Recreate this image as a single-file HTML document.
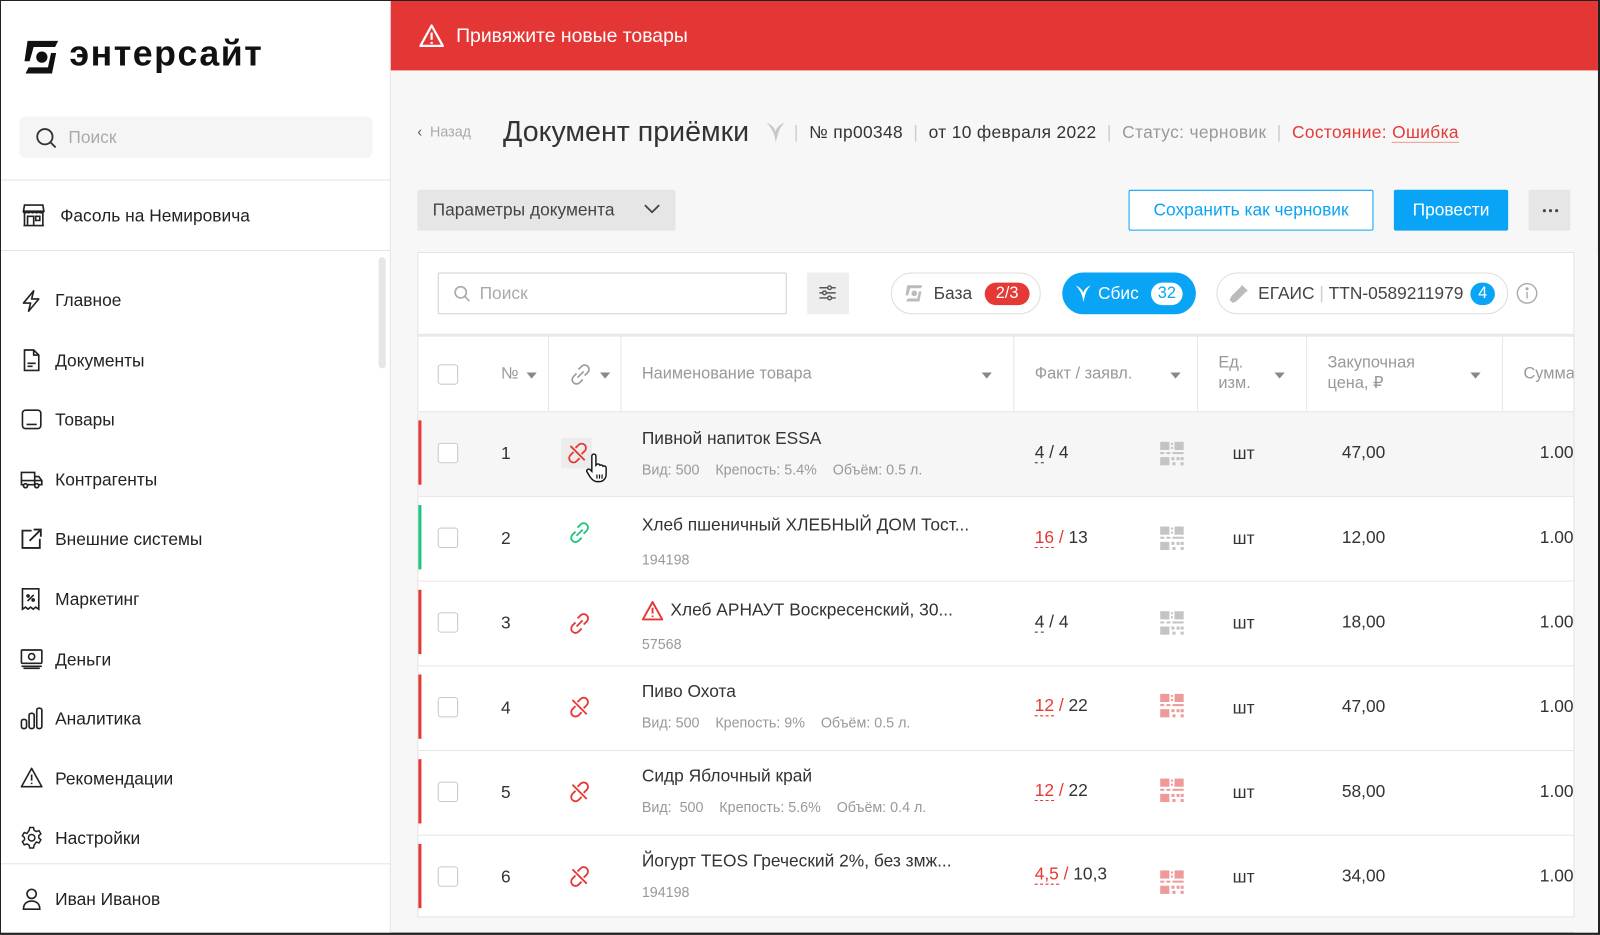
<!DOCTYPE html>
<html><head><meta charset="utf-8"><style>
*{box-sizing:border-box;margin:0;padding:0}
html,body{width:1600px;height:935px;overflow:hidden;background:#222}
#w{position:absolute;left:0;top:0;width:1568px;height:916px;transform:scale(1.020408);transform-origin:0 0;background:#f7f7f7;font-family:"Liberation Sans",sans-serif;color:#333;overflow:hidden;border:1px solid #222;border-right-width:2px;border-bottom-width:2px}
.a{position:absolute;white-space:nowrap}
#sb{position:absolute;left:0;top:0;width:382px;height:916px;background:#fff;border-right:1px solid #e3e3e3}
.nav{font-size:17px;color:#222}
.hr{position:absolute;left:0;width:382px;height:1px;background:#e4e4e4}
svg{position:absolute;overflow:visible}
.g{color:#9a9a9a}
.card{position:absolute;left:408px;top:246px;width:1134px;height:652px;background:#fff;border:1px solid #e3e3e3}
.row{position:absolute;left:409px;width:1132px;height:83px;border-top:1px solid #e6e6e6}
.cb{position:absolute;width:20px;height:20px;border:1px solid #c9c9c9;border-radius:3px;background:#fff}
.nm{font-size:17px;color:#333}
.sub{font-size:14px;color:#999}
.num{font-size:17px}
.red{color:#e53935}
.col{position:absolute;top:329px;width:1px;height:73px;background:#e6e6e6}
.th{font-size:16px;color:#999}
.tri{position:absolute;width:0;height:0;border-left:5px solid transparent;border-right:5px solid transparent;border-top:6px solid #888}
</style></head><body><div id="w">

<div id="sb">
 <svg style="left:20px;top:37px" width="40" height="36" viewBox="0 0 40 36"><path d="M6 2h30l-3 6H12L8 22H3z M34 14l-4 20H4l3-6h19l3-14z" fill="#111"/><circle cx="20" cy="18" r="5.5" fill="#111"/></svg>
 <div class="a" style="left:67px;top:32px;font-size:35px;font-weight:bold;color:#111;letter-spacing:1.5px">энтерсайт</div>
 <div class="a" style="left:18px;top:113px;width:346px;height:41px;background:#f5f5f5;border-radius:6px"></div>
 <svg style="left:34px;top:124px" width="22" height="22" viewBox="0 0 22 22"><circle cx="9" cy="9" r="7.5" fill="none" stroke="#333" stroke-width="1.8"/><path d="M14.5 14.5l5 5" stroke="#333" stroke-width="1.8"/></svg>
 <div class="a" style="left:66px;top:124px;font-size:17px;color:#aaa">Поиск</div>
 <div class="hr" style="top:175px"></div>
 <svg style="left:20px;top:198px" width="24" height="24" viewBox="0 0 24 24" fill="none" stroke="#222" stroke-width="1.6"><path d="M3 2h18l1 6H2z M2 8c0 2 3 2 3 0c0 2 4 2 4 0c0 2 4 2 4 0c0 2 4 2 4 0c0 2 4 2 5 0 M3 9v13h18V9 M6 13h6v9H6z M14 13h4v4h-4z M2 22h20"/></svg>
 <div class="a nav" style="left:58px;top:201px">Фасоль на Немировича</div>
 <div class="hr" style="top:244px"></div>
 <div class="a" style="left:370px;top:251px;width:7px;height:109px;background:#e6e6e6;border-radius:4px"></div>

 <svg style="left:20px;top:283px" width="20" height="22" viewBox="0 0 20 22" fill="none" stroke="#222" stroke-width="1.6" stroke-linejoin="round"><path d="M12 1L2 13h7l-2 8 10-12h-7z"/></svg>
 <div class="a nav" style="left:53px;top:284px">Главное</div>
 <svg style="left:21px;top:341px" width="18" height="22" viewBox="0 0 18 22" fill="none" stroke="#222" stroke-width="1.6"><path d="M2 1h9l5 5v15H2z M11 1v5h5 M5 14h8 M5 17h5"/></svg>
 <div class="a nav" style="left:53px;top:343px">Документы</div>
 <svg style="left:20px;top:400px" width="20" height="20" viewBox="0 0 20 20" fill="none" stroke="#222" stroke-width="1.6"><rect x="1" y="1" width="18" height="18" rx="3"/><path d="M5 15h10"/></svg>
 <div class="a nav" style="left:53px;top:401px">Товары</div>
 <svg style="left:19px;top:459px" width="22" height="20" viewBox="0 0 22 20" fill="none" stroke="#222" stroke-width="1.6"><path d="M1 3h13v12H1z M14 7h4l3 4v4h-7 M1 11h20"/><circle cx="5" cy="16" r="2" fill="#fff"/><circle cx="16" cy="16" r="2" fill="#fff"/></svg>
 <div class="a nav" style="left:53px;top:460px">Контрагенты</div>
 <svg style="left:19px;top:516px" width="22" height="22" viewBox="0 0 22 22" fill="none" stroke="#222" stroke-width="1.8"><path d="M11 3H2v17h17v-9 M9 13L20 2 M13 2h7v7"/></svg>
 <div class="a nav" style="left:53px;top:518px">Внешние системы</div>
 <svg style="left:20px;top:575px" width="18" height="22" viewBox="0 0 18 22" fill="none" stroke="#222" stroke-width="1.6"><path d="M1 1h16v20l-3-2-2.5 2-2.5-2-2.5 2-2.5-2-3 2z M6 13l6-6"/><circle cx="6.5" cy="8" r="1" fill="#222"/><circle cx="11.5" cy="12" r="1" fill="#222"/></svg>
 <div class="a nav" style="left:53px;top:577px">Маркетинг</div>
 <svg style="left:19px;top:635px" width="22" height="20" viewBox="0 0 22 20" fill="none" stroke="#222" stroke-width="1.6"><rect x="1" y="1" width="20" height="13" rx="1"/><circle cx="11" cy="7.5" r="3"/><path d="M1 17h20 M3 19h16"/></svg>
 <div class="a nav" style="left:53px;top:636px">Деньги</div>
 <svg style="left:19px;top:692px" width="22" height="22" viewBox="0 0 22 22" fill="none" stroke="#222" stroke-width="1.6"><rect x="1" y="12" width="5" height="9" rx="2"/><rect x="8.5" y="6" width="5" height="15" rx="2"/><rect x="16" y="1" width="5" height="20" rx="2"/></svg>
 <div class="a nav" style="left:53px;top:694px">Аналитика</div>
 <svg style="left:19px;top:751px" width="22" height="20" viewBox="0 0 22 20" fill="none" stroke="#222" stroke-width="1.6" stroke-linejoin="round"><path d="M11 1L1 19h20z M11 7v6 M11 15v1.5"/></svg>
 <div class="a nav" style="left:53px;top:753px">Рекомендации</div>
 <svg style="left:19px;top:809px" width="22" height="22" viewBox="0 0 24 24" fill="none" stroke="#222" stroke-width="1.6"><circle cx="12" cy="12" r="3.5"/><path d="M10 1h4l.6 3 2.4 1.4 2.9-1 2 3.4-2.3 2v2.4l2.3 2-2 3.4-2.9-1L14.6 20 14 23h-4l-.6-3L7 18.6l-2.9 1-2-3.4 2.3-2v-2.4l-2.3-2 2-3.4 2.9 1L9.4 4z"/></svg>
 <div class="a nav" style="left:53px;top:811px">Настройки</div>
 <div class="hr" style="top:845px"></div>
 <svg style="left:20px;top:869px" width="20" height="22" viewBox="0 0 20 22" fill="none" stroke="#222" stroke-width="1.6"><circle cx="10" cy="6" r="4.5"/><path d="M2 21c0-5 3-8 8-8s8 3 8 8z"/></svg>
 <div class="a nav" style="left:53px;top:871px">Иван Иванов</div>
</div>

<div class="a" style="left:382px;top:0;width:1186px;height:68px;background:#e53636"></div>
<svg style="left:409px;top:22px" width="26" height="24" viewBox="0 0 26 24" fill="none" stroke="#fff" stroke-width="2.2" stroke-linejoin="round"><path d="M13 2L2 22h22z M13 9v7 M13 18v2"/></svg>
<div class="a" style="left:446px;top:24px;font-size:19px;color:#fff">Привяжите новые товары</div>

<div class="a g" style="left:408px;top:120px;font-size:14px;color:#aaa"><span style="color:#555">‹</span>&nbsp; Назад</div>
<div class="a" style="left:492px;top:112px;font-size:28px;color:#333">Документ приёмки</div>
<svg style="left:750px;top:118px" width="18" height="22" viewBox="0 0 18 22"><path d="M0 1c5 2 8 5 9 9 1-4 4-7 9-9-4 4-6 8-7 13l-2 7c0-8-4-15-9-20z" fill="#c8c8c8"/></svg>
<div class="a" style="left:777px;top:119px;font-size:17px;color:#333;letter-spacing:0.35px"><span style="color:#ccc">|</span>&nbsp; № пр00348 &nbsp;<span style="color:#ccc">|</span>&nbsp; от 10 февраля 2022 &nbsp;<span style="color:#ccc">|</span>&nbsp; <span style="color:#999">Статус: черновик</span> &nbsp;<span style="color:#ccc">|</span>&nbsp; <span class="red">Состояние: <span style="border-bottom:1px solid #f09999">Ошибка</span></span></div>

<div class="a" style="left:408px;top:185px;width:253px;height:40px;background:#e6e6e6;border-radius:2px"></div>
<div class="a" style="left:423px;top:195px;font-size:17px;color:#444">Параметры документа</div>
<svg style="left:630px;top:199px" width="16" height="10" viewBox="0 0 16 10" fill="none" stroke="#444" stroke-width="1.8"><path d="M1 1l7 7 7-7"/></svg>
<div class="a" style="left:1105px;top:185px;width:240px;height:40px;border:1px solid #0aa4f6;border-radius:2px;background:#fff;color:#0aa4f6;font-size:17px;text-align:center;line-height:38px">Сохранить как черновик</div>
<div class="a" style="left:1365px;top:185px;width:112px;height:40px;background:#0aa4f6;border-radius:2px;color:#fff;font-size:17px;text-align:center;line-height:40px">Провести</div>
<div class="a" style="left:1497px;top:185px;width:41px;height:40px;background:#e6e6e6;border-radius:2px"></div>
<div class="a" style="left:1511px;top:204px;width:3px;height:3px;background:#444;border-radius:2px;box-shadow:6px 0 #444,12px 0 #444"></div>

<div class="card"></div>
<div class="a" style="left:428px;top:266px;width:342px;height:41px;border:1px solid #cfcfcf;border-radius:2px;background:#fff"></div>
<svg style="left:444px;top:279px" width="16" height="16" viewBox="0 0 16 16" fill="none" stroke="#aaa" stroke-width="1.6"><circle cx="6.5" cy="6.5" r="5.5"/><path d="M10.5 10.5l4.5 4.5"/></svg>
<div class="a" style="left:469px;top:277px;font-size:17px;color:#aaa">Поиск</div>
<div class="a" style="left:790px;top:266px;width:41px;height:41px;background:#eee;border-radius:2px"></div>
<svg style="left:801px;top:278px" width="18" height="16" viewBox="0 0 18 16" fill="none" stroke="#555" stroke-width="1.4"><path d="M1 3h16 M1 8h16 M1 13h16"/><circle cx="11" cy="3" r="1.8" fill="#eee"/><circle cx="6" cy="8" r="1.8" fill="#eee"/><circle cx="11" cy="13" r="1.8" fill="#eee"/></svg>

<div class="a" style="left:872px;top:266px;width:147px;height:41px;border:1px solid #ddd;border-radius:21px;background:#fff"></div>
<svg style="left:885px;top:277px" width="20" height="19" viewBox="0 0 40 36"><path d="M6 2h30l-3 6H12L8 22H3z M34 14l-4 20H4l3-6h19l3-14z" fill="#bbb"/><circle cx="20" cy="18" r="5.5" fill="#bbb"/></svg>
<div class="a" style="left:914px;top:277px;font-size:17px;color:#444">База</div>
<div class="a" style="left:964px;top:276px;width:44px;height:22px;border-radius:11px;background:#e53935;color:#fff;font-size:16px;text-align:center;line-height:22px">2/3</div>
<div class="a" style="left:1040px;top:266px;width:131px;height:41px;border-radius:21px;background:#0aa4f6"></div>
<svg style="left:1053px;top:278px" width="15" height="18" viewBox="0 0 18 22"><path d="M0 1c5 2 8 5 9 9 1-4 4-7 9-9-4 4-6 8-7 13l-2 7c0-8-4-15-9-20z" fill="#fff"/></svg>
<div class="a" style="left:1075px;top:277px;font-size:17px;color:#fff">Сбис</div>
<div class="a" style="left:1127px;top:276px;width:31px;height:22px;border-radius:11px;background:#fff;color:#0aa4f6;font-size:16px;text-align:center;line-height:22px">32</div>
<div class="a" style="left:1191px;top:266px;width:286px;height:41px;border:1px solid #ddd;border-radius:21px;background:#fff"></div>
<svg style="left:1203px;top:277px" width="20" height="20" viewBox="0 0 20 20"><path d="M13 1l6 6-2 1-9 9-4 2-3-3 2-4 9-9z" fill="#bbb"/></svg>
<div class="a" style="left:1232px;top:277px;font-size:17px;color:#444">ЕГАИС <span style="color:#ccc">|</span> TTN-0589211979</div>
<div class="a" style="left:1440px;top:276px;width:24px;height:22px;border-radius:11px;background:#0aa4f6;color:#fff;font-size:16px;text-align:center;line-height:22px">4</div>
<svg style="left:1485px;top:276px" width="21" height="21" viewBox="0 0 21 21" fill="none" stroke="#aaa" stroke-width="1.4"><circle cx="10.5" cy="10.5" r="9.5"/><path d="M10.5 9v6.5"/><circle cx="10.5" cy="6" r=".8" fill="#aaa"/></svg>

<div class="a" style="left:409px;top:326px;width:1132px;height:3px;background:#e8e8e8"></div>
<div class="col" style="left:536px"></div><div class="col" style="left:607px"></div><div class="col" style="left:992px"></div><div class="col" style="left:1172px"></div><div class="col" style="left:1279px"></div><div class="col" style="left:1471px"></div>
<div class="cb" style="left:428px;top:356px"></div>
<div class="a th" style="left:490px;top:357px">№</div><div class="tri" style="left:515px;top:364px"></div>
<svg style="left:557px;top:355px" width="22" height="22" viewBox="0 0 22 22" fill="none" stroke="#999" stroke-width="1.6"><path d="M9 6l3-3a4 4 0 016 6l-3 3 M13 16l-3 3a4 4 0 01-6-6l3-3 M8 14l6-6"/></svg>
<div class="tri" style="left:587px;top:364px"></div>
<div class="a th" style="left:628px;top:357px">Наименование товара</div><div class="tri" style="left:961px;top:364px"></div>
<div class="a th" style="left:1013px;top:357px">Факт / заявл.</div><div class="tri" style="left:1146px;top:364px"></div>
<div class="a th" style="left:1193px;top:345px;line-height:20px">Ед.<br>изм.</div><div class="tri" style="left:1248px;top:364px"></div>
<div class="a th" style="left:1300px;top:345px;line-height:20px">Закупочная<br>цена, ₽</div><div class="tri" style="left:1440px;top:364px"></div>
<div class="a th" style="left:1492px;top:357px">Сумма</div>

<div class="row" style="top:402px;background:#f6f6f6"></div>
<div class="row" style="top:485px"></div>
<div class="row" style="top:568px"></div>
<div class="row" style="top:651px"></div>
<div class="row" style="top:734px"></div>
<div class="row" style="top:817px;height:80px"></div>
<div class="a" style="left:409px;top:411px;width:3px;height:63px;background:#e53935"></div>
<div class="a" style="left:409px;top:494px;width:3px;height:63px;background:#21c47f"></div>
<div class="a" style="left:409px;top:577px;width:3px;height:63px;background:#e53935"></div>
<div class="a" style="left:409px;top:660px;width:3px;height:63px;background:#e53935"></div>
<div class="a" style="left:409px;top:743px;width:3px;height:63px;background:#e53935"></div>
<div class="a" style="left:409px;top:826px;width:3px;height:63px;background:#e53935"></div>

<div class="cb" style="left:428px;top:433px"></div><div class="a num" style="left:490px;top:434px">1</div>
<div class="cb" style="left:428px;top:516px"></div><div class="a num" style="left:490px;top:517px">2</div>
<div class="cb" style="left:428px;top:599px"></div><div class="a num" style="left:490px;top:600px">3</div>
<div class="cb" style="left:428px;top:682px"></div><div class="a num" style="left:490px;top:683px">4</div>
<div class="cb" style="left:428px;top:765px"></div><div class="a num" style="left:490px;top:766px">5</div>
<div class="cb" style="left:428px;top:848px"></div><div class="a num" style="left:490px;top:849px">6</div>

<div class="a" style="left:549px;top:428px;width:30px;height:30px;background:#ececec;border-radius:2px"></div>
<svg style="left:554px;top:432px" width="22" height="22" viewBox="0 0 22 22" fill="none" stroke="#e53935" stroke-width="1.8"><path d="M9 6l3-3a4 4 0 016 6l-3 3 M13 16l-3 3a4 4 0 01-6-6l3-3 M4 4l14 14"/></svg>
<svg style="left:574px;top:444px" width="20" height="28" viewBox="0 0 20 28"><path d="M5 2a2 2 0 014 0v9l1-1a2 2 0 013 1 2 2 0 013 1 2 2 0 013 1v7c0 4-3 7-7 7h-2c-3 0-5-2-7-5l-3-5a2 2 0 013-2l2 2z" fill="#fff" stroke="#111" stroke-width="1.4"/><path d="M10 20v4 M12.5 20v4 M15 20v4" stroke="#111" stroke-width="1.2"/></svg>
<svg style="left:556px;top:510px" width="22" height="22" viewBox="0 0 22 22" fill="none" stroke="#21c47f" stroke-width="1.8"><path d="M9 6l3-3a4 4 0 016 6l-3 3 M13 16l-3 3a4 4 0 01-6-6l3-3 M8 14l6-6"/></svg>
<svg style="left:556px;top:599px" width="22" height="22" viewBox="0 0 22 22" fill="none" stroke="#e53935" stroke-width="1.8"><path d="M9 6l3-3a4 4 0 016 6l-3 3 M13 16l-3 3a4 4 0 01-6-6l3-3 M8 14l6-6"/></svg>
<svg style="left:556px;top:681px" width="22" height="22" viewBox="0 0 22 22" fill="none" stroke="#e53935" stroke-width="1.8"><path d="M9 6l3-3a4 4 0 016 6l-3 3 M13 16l-3 3a4 4 0 01-6-6l3-3 M4 4l14 14"/></svg>
<svg style="left:556px;top:764px" width="22" height="22" viewBox="0 0 22 22" fill="none" stroke="#e53935" stroke-width="1.8"><path d="M9 6l3-3a4 4 0 016 6l-3 3 M13 16l-3 3a4 4 0 01-6-6l3-3 M4 4l14 14"/></svg>
<svg style="left:556px;top:847px" width="22" height="22" viewBox="0 0 22 22" fill="none" stroke="#e53935" stroke-width="1.8"><path d="M9 6l3-3a4 4 0 016 6l-3 3 M13 16l-3 3a4 4 0 01-6-6l3-3 M4 4l14 14"/></svg>

<div class="a nm" style="left:628px;top:419px">Пивной напиток ESSA</div>
<div class="a sub" style="left:628px;top:451px">Вид: 500 &nbsp;&nbsp; Крепость: 5.4% &nbsp;&nbsp; Объём: 0.5 л.</div>
<div class="a nm" style="left:628px;top:504px">Хлеб пшеничный ХЛЕБНЫЙ ДОМ Тост...</div>
<div class="a sub" style="left:628px;top:539px">194198</div>
<svg style="left:628px;top:588px" width="21" height="19" viewBox="0 0 22 20" fill="none" stroke="#e53935" stroke-width="2" stroke-linejoin="round"><path d="M11 1L1 19h20z M11 7v6 M11 15v1.5"/></svg>
<div class="a nm" style="left:656px;top:587px">Хлеб АРНАУТ Воскресенский, 30...</div>
<div class="a sub" style="left:628px;top:622px">57568</div>
<div class="a nm" style="left:628px;top:667px">Пиво Охота</div>
<div class="a sub" style="left:628px;top:699px">Вид: 500 &nbsp;&nbsp; Крепость: 9% &nbsp;&nbsp; Объём: 0.5 л.</div>
<div class="a nm" style="left:628px;top:750px">Сидр Яблочный край</div>
<div class="a sub" style="left:628px;top:782px">Вид: &nbsp;500 &nbsp;&nbsp; Крепость: 5.6% &nbsp;&nbsp; Объём: 0.4 л.</div>
<div class="a nm" style="left:628px;top:833px">Йогурт TEOS Греческий 2%, без змж...</div>
<div class="a sub" style="left:628px;top:865px">194198</div>

<div class="a num" style="left:1013px;top:433px"><span style="border-bottom:1px dashed #333">4</span> / 4</div>
<div class="a num" style="left:1013px;top:516px"><span class="red" style="border-bottom:1px dashed #e53935">16</span><span class="red"> /</span> 13</div>
<div class="a num" style="left:1013px;top:599px"><span style="border-bottom:1px dashed #333">4</span> / 4</div>
<div class="a num" style="left:1013px;top:681px"><span class="red" style="border-bottom:1px dashed #e53935">12</span><span class="red"> /</span> 22</div>
<div class="a num" style="left:1013px;top:764px"><span class="red" style="border-bottom:1px dashed #e53935">12</span><span class="red"> /</span> 22</div>
<div class="a num" style="left:1013px;top:846px"><span class="red" style="border-bottom:1px dashed #e53935">4,5</span><span class="red"> /</span> 10,3</div>

<svg width="0" height="0"><defs><g id="qr"><rect x="0" y="0" width="9" height="8"/><rect x="14" y="0" width="9" height="8"/><rect x="10.5" y="1" width="2" height="2"/><rect x="10.5" y="5" width="2" height="2"/><rect x="0" y="10" width="4" height="2"/><rect x="6" y="10" width="4" height="2"/><rect x="12" y="10" width="11" height="2"/><rect x="0" y="15" width="9" height="8"/><rect x="11" y="15" width="3" height="3"/><rect x="16" y="15" width="3" height="3"/><rect x="20" y="15" width="3" height="3"/><rect x="12" y="20" width="3" height="3"/><rect x="20" y="20" width="3" height="3"/></g></defs></svg>
<svg style="left:1136px;top:432px" width="24" height="24"><use href="#qr" fill="#c4c4c4"/></svg>
<svg style="left:1136px;top:515px" width="24" height="24"><use href="#qr" fill="#c4c4c4"/></svg>
<svg style="left:1136px;top:598px" width="24" height="24"><use href="#qr" fill="#c4c4c4"/></svg>
<svg style="left:1136px;top:679px" width="24" height="24"><use href="#qr" fill="#ef9a9a"/></svg>
<svg style="left:1136px;top:762px" width="24" height="24"><use href="#qr" fill="#ef9a9a"/></svg>
<svg style="left:1136px;top:852px" width="24" height="24"><use href="#qr" fill="#ef9a9a"/></svg>

<div class="a num" style="left:1207px;top:434px">шт</div><div class="a num" style="left:1314px;top:433px">47,00</div><div class="a num" style="left:1508px;top:433px">1.00</div>
<div class="a num" style="left:1207px;top:517px">шт</div><div class="a num" style="left:1314px;top:516px">12,00</div><div class="a num" style="left:1508px;top:516px">1.00</div>
<div class="a num" style="left:1207px;top:600px">шт</div><div class="a num" style="left:1314px;top:599px">18,00</div><div class="a num" style="left:1508px;top:599px">1.00</div>
<div class="a num" style="left:1207px;top:683px">шт</div><div class="a num" style="left:1314px;top:682px">47,00</div><div class="a num" style="left:1508px;top:682px">1.00</div>
<div class="a num" style="left:1207px;top:766px">шт</div><div class="a num" style="left:1314px;top:765px">58,00</div><div class="a num" style="left:1508px;top:765px">1.00</div>
<div class="a num" style="left:1207px;top:849px">шт</div><div class="a num" style="left:1314px;top:848px">34,00</div><div class="a num" style="left:1508px;top:848px">1.00</div>
<div class="a" style="left:1542px;top:246px;width:26px;height:670px;background:#f7f7f7"></div>
<div class="a" style="left:1541px;top:246px;width:1px;height:652px;background:#e3e3e3"></div>
</div></body></html>
